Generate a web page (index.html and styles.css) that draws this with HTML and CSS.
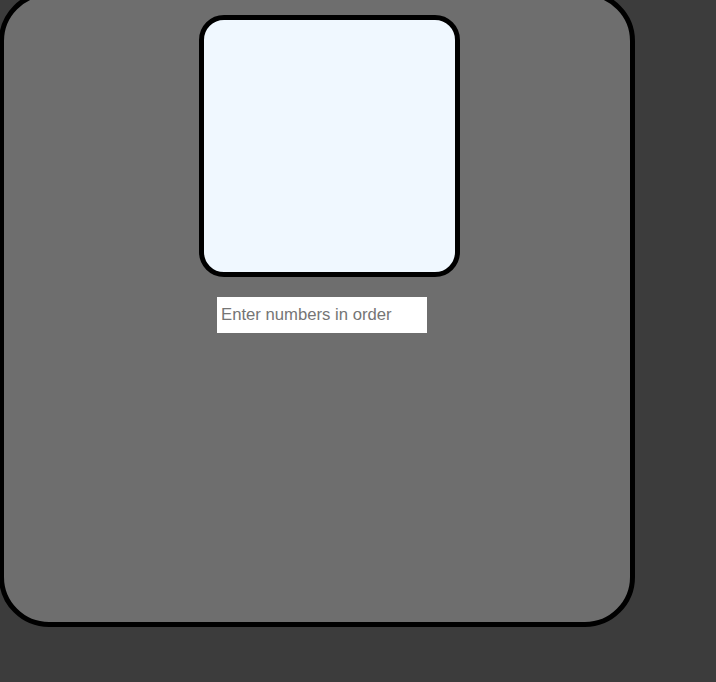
FILE: index.html
```html
<!DOCTYPE html>
<html lang="en">
<head>
  <meta charset="UTF-8">
  <meta name="viewport" content="width=device-width, initial-scale=1.0">
  <title>Number Order</title>
  <link rel="stylesheet" href="styles.css">
</head>
<body>

  <div id="board">
    <div id="display-box"></div>
    <input type="text" id="answer" placeholder="Enter numbers in order">
  </div>

</body>
</html>
```
FILE: styles.css
```css
    body {
      margin: 0;
      background-color: #3c3c3c;
      font-family: 'Liberation Sans', Arial, sans-serif;
      overflow: hidden;
    }

    #board {
      width: 626px;
      height: 607px;
      margin-top: -9px;
      margin-left: -1px;
      background-color: #6e6e6e;
      border: 5px solid #000;
      border-radius: 50px;
      display: flex;
      flex-direction: column;
      align-items: flex-start;
      padding-top: 19px;
      box-sizing: content-box;
    }

    #display-box {
      width: 251px;
      height: 252px;
      margin-left: 195px;
      background-color: #f0f8ff;
      border: 5px solid #000;
      border-radius: 25px;
    }

    #answer {
      width: 210px;
      height: 36px;
      margin-left: 213px;
      margin-top: 20px;
      padding: 0 4px;
      box-sizing: border-box;
      border: none;
      background-color: #fff;
      font-family: 'Liberation Sans', Arial, sans-serif;
      font-size: 16.7px;
      color: #333;
    }

    #answer::placeholder {
      color: #757575;
    }
```
